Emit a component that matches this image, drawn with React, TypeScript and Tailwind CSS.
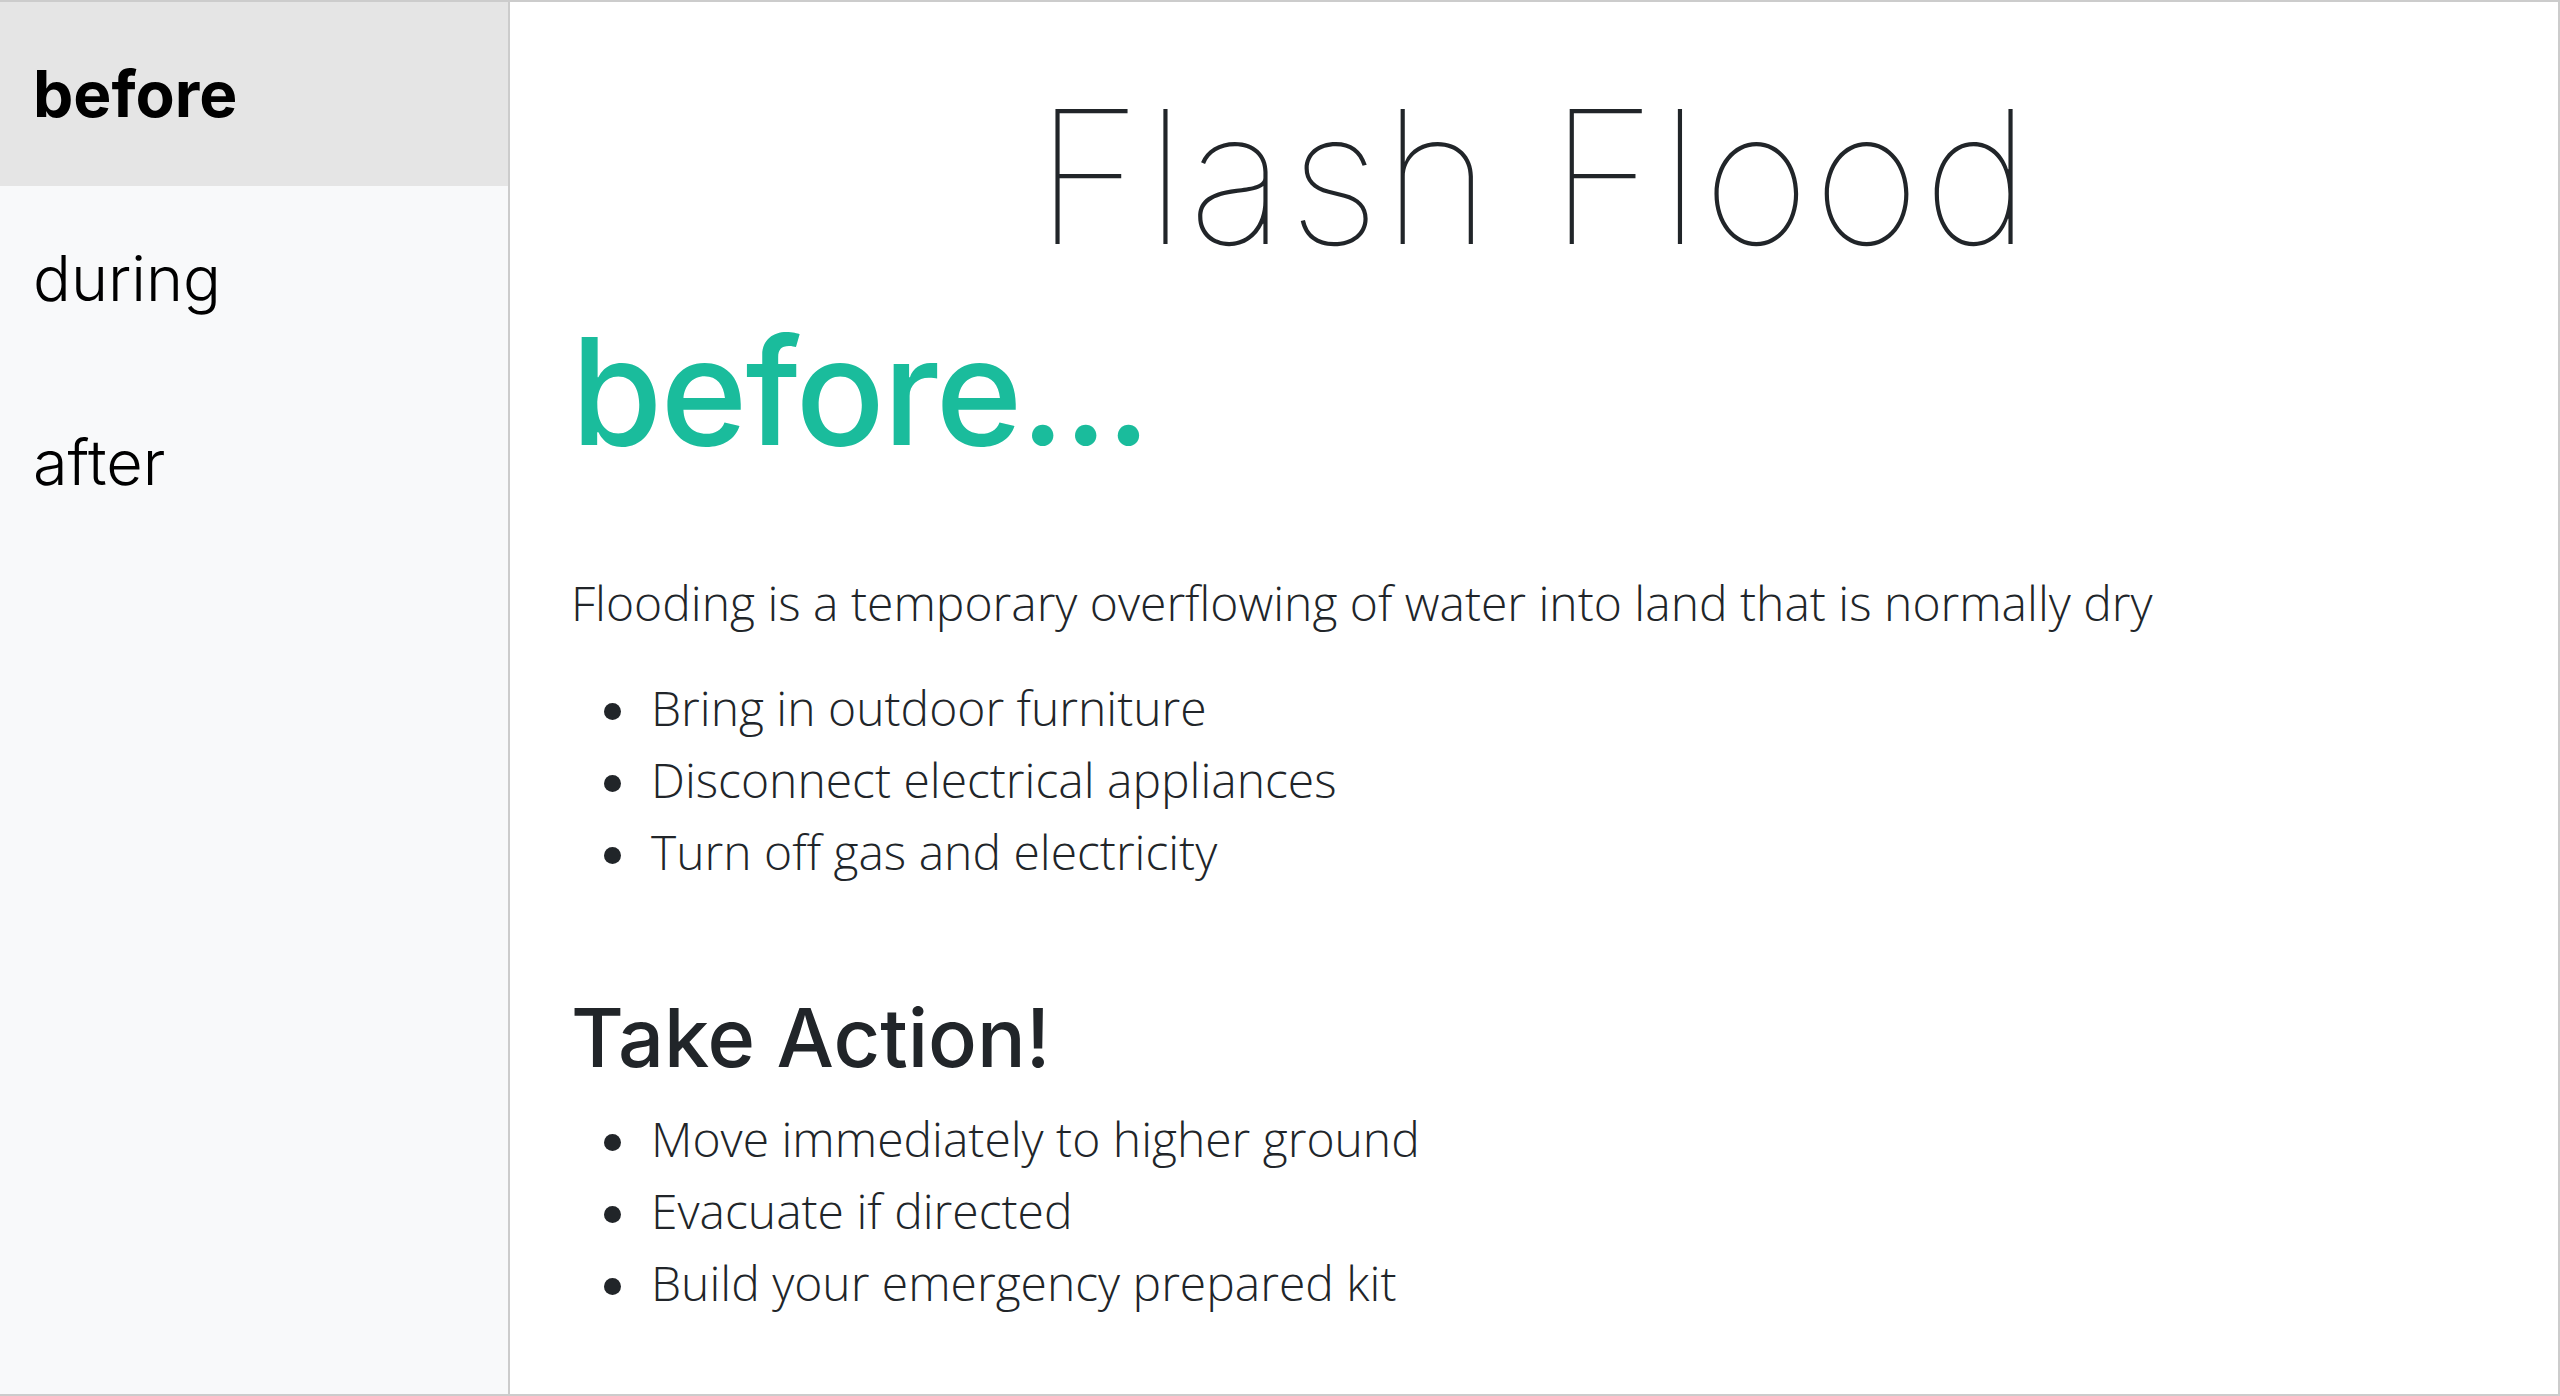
import React from "react";

const items1 = [
  "Bring in outdoor furniture",
  "Disconnect electrical appliances",
  "Turn off gas and electricity",
];
const items2 = [
  "Move immediately to higher ground",
  "Evacuate if directed",
  "Build your emergency prepared kit",
];

function BulletList({ items }: { items: string[] }) {
  return (
    <ul className="flex flex-col">
      {items.map((t) => (
        <li key={t} className="flex items-center h-[72px]">
          <span className="w-[80px] flex items-center">
            <span className="ml-[33px] mt-[6px] w-[17px] h-[17px] rounded-full bg-[#212529]" />
          </span>
          <span>{t}</span>
        </li>
      ))}
    </ul>
  );
}

export default function App() {
  return (
    <div className="w-[2560px] h-[1396px] box-border border-t-2 border-r-2 border-b-2 border-[#cccccc] flex bg-white overflow-hidden">
      <nav className="w-[510px] shrink-0 bg-[#f8f9fa] border-r-2 border-[#cccccc] flex flex-col text-black" style={{ fontFamily: "Inter, 'Noto Sans', sans-serif" }}>
        <div className="h-[184px] flex items-center px-[33px] bg-[#e5e5e5] text-[64px] leading-none font-bold">before</div>
        <div className="h-[184px] flex items-center px-[33px] text-[63px] leading-none font-light">during</div>
        <div className="h-[184px] flex items-center px-[33px] text-[63px] leading-none font-light">after</div>
      </nav>
      <main className="flex-1 px-[61px] text-[#212529]">
        <h1 className="mt-[83px] text-center text-[185px] leading-none font-thin tracking-[3px]" style={{ fontFamily: "Inter, sans-serif" }}>Flash Flood</h1>
        <h2 className="mt-[48px] text-[148px] leading-none font-medium tracking-[-2px] text-[#1abc9c]" style={{ fontFamily: "Inter, sans-serif" }}>before...</h2>
        <div className="text-[48px] leading-[72px] font-light" style={{ fontFamily: "'Open Sans', sans-serif" }}>
          <p className="mt-[101px] mb-[33px]">Flooding is a temporary overflowing of water into land that is normally dry</p>
          <BulletList items={items1} />
        </div>
        <h3 className="mt-[110px] text-[81px] leading-none font-medium" style={{ fontFamily: "Inter, sans-serif" }}>Take Action!</h3>
        <div className="mt-[24px] text-[48px] leading-[72px] font-light" style={{ fontFamily: "'Open Sans', sans-serif" }}>
          <BulletList items={items2} />
        </div>
      </main>
    </div>
  );
}
